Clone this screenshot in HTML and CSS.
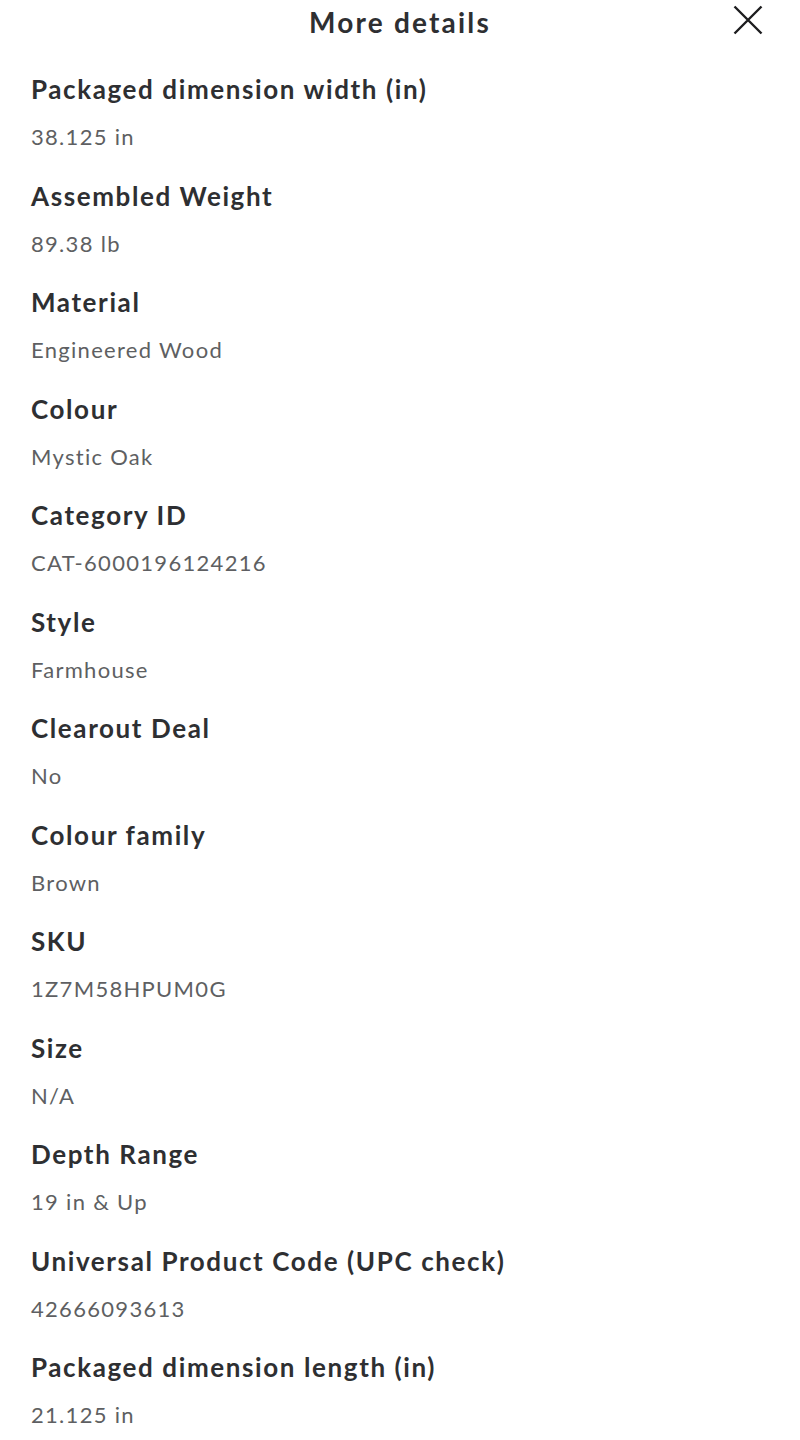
FILE: index.html
```html
<!DOCTYPE html>
<html lang="en">
<head>
<meta charset="utf-8">
<title>More details</title>
<link rel="stylesheet" href="styles.css">
</head>
<body>
<div class="sheet">
  <header class="header">
    <h1 class="title">More details</h1>
    <button class="close" aria-label="Close">
      <svg width="30" height="30" viewBox="0 0 30 30"><path d="M1.5 1.5 L28.5 28.5 M28.5 1.5 L1.5 28.5" stroke="#1d1d1f" stroke-width="2.4" fill="none"/></svg>
    </button>
  </header>
  <dl class="details">
    <div class="item"><dt>Packaged dimension width (in)</dt><dd>38.125 in</dd></div>
    <div class="item"><dt>Assembled Weight</dt><dd>89.38 lb</dd></div>
    <div class="item"><dt>Material</dt><dd>Engineered Wood</dd></div>
    <div class="item"><dt>Colour</dt><dd>Mystic Oak</dd></div>
    <div class="item"><dt>Category ID</dt><dd>CAT-6000196124216</dd></div>
    <div class="item"><dt>Style</dt><dd>Farmhouse</dd></div>
    <div class="item"><dt>Clearout Deal</dt><dd>No</dd></div>
    <div class="item"><dt>Colour family</dt><dd>Brown</dd></div>
    <div class="item"><dt>SKU</dt><dd>1Z7M58HPUM0G</dd></div>
    <div class="item"><dt>Size</dt><dd>N/A</dd></div>
    <div class="item"><dt>Depth Range</dt><dd>19 in &amp; Up</dd></div>
    <div class="item"><dt>Universal Product Code (UPC check)</dt><dd>42666093613</dd></div>
    <div class="item"><dt>Packaged dimension length (in)</dt><dd>21.125 in</dd></div>
  </dl>
</div>
</body>
</html>
```

FILE: styles.css
```css
* { box-sizing: border-box; }
html, body { margin: 0; padding: 0; background: #fff; }
body { font-family: Lato, "Open Sans", sans-serif; color: #2e2f32; }
.sheet { width: 800px; }
.header {
  position: relative;
  height: 44px;
  display: flex;
  align-items: center;
  justify-content: center;
}
.title {
  margin: 0;
  font-size: 28px;
  font-weight: 700;
  letter-spacing: 2.2px;
  line-height: 44px;
  color: #2e2f32;
}
.close {
  position: absolute;
  right: 37px;
  top: 5px;
  width: 30px;
  height: 30px;
  padding: 0;
  border: 0;
  background: none;
  display: flex;
}
.details {
  margin: 0;
  padding: 29px 31px 0;
  display: flex;
  flex-direction: column;
  gap: 26.5px;
}
.item { display: flex; flex-direction: column; gap: 16px; }
.item dt {
  font-size: 26px;
  font-weight: 700;
  letter-spacing: 1.6px;
  line-height: 32px;
  color: #2e2f32;
}
.item dd {
  margin: 0;
  font-size: 22px;
  letter-spacing: 1.3px;
  line-height: 32px;
  color: #5e5f62;
}
```
